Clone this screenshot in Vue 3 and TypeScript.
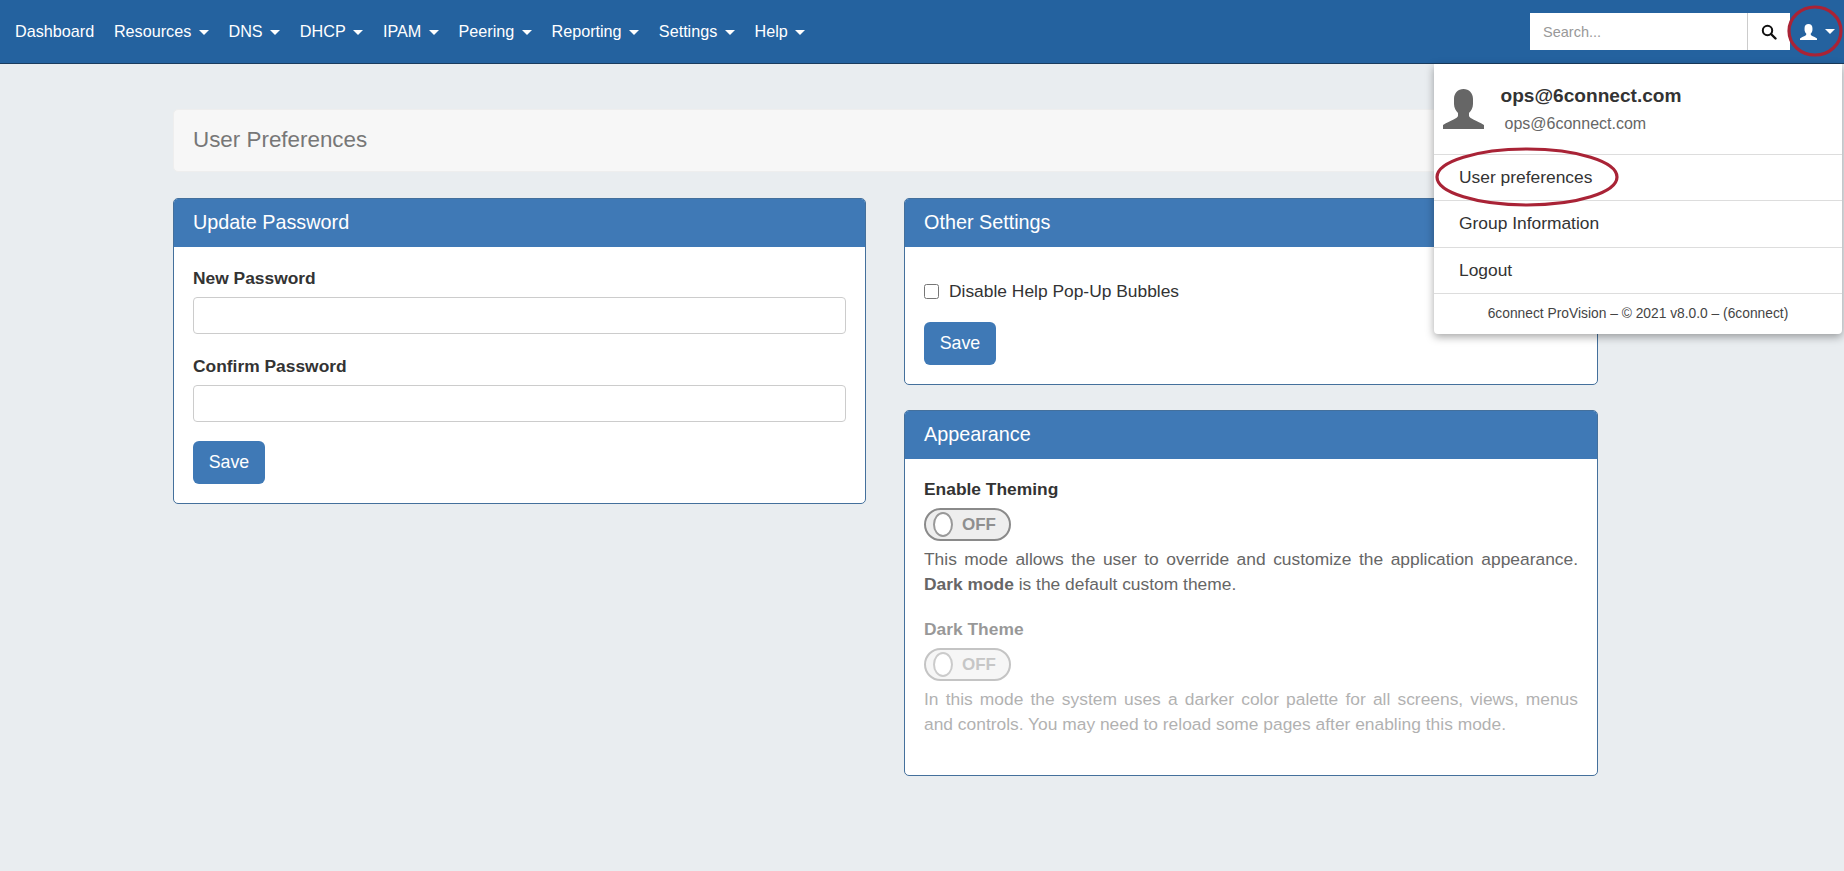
<script setup lang="ts">
const navItems = [
  { label: 'Dashboard', caret: false },
  { label: 'Resources', caret: true },
  { label: 'DNS', caret: true },
  { label: 'DHCP', caret: true },
  { label: 'IPAM', caret: true },
  { label: 'Peering', caret: true },
  { label: 'Reporting', caret: true },
  { label: 'Settings', caret: true },
  { label: 'Help', caret: true },
]

const menuItems = ['User preferences', 'Group Information', 'Logout']

const personPath =
  'M20.500 0C26 0 30 4 30 10v5c0 4-2 7-4 9v3c1 3 7 4 15 9v4H0v-4c8-5 14-6 15-9v-3c-2-2-4-5-4-9v-5C11 4 15 0 20.500 0z'
</script>

<template>
  <div class="page">
    <header class="navbar">
      <nav class="nav-links">
        <a v-for="item in navItems" :key="item.label" class="nav-link">
          {{ item.label }}<span v-if="item.caret" class="caret"></span>
        </a>
      </nav>
      <div class="search">
        <input class="search-input" placeholder="Search..." spellcheck="false" />
        <button class="search-btn" aria-label="Search">
          <svg width="16" height="16" viewBox="0 0 16 16">
            <circle cx="6.500" cy="6.500" r="4.700" fill="none" stroke="#111" stroke-width="2" />
            <path d="M10 10l4.500 4.500" stroke="#111" stroke-width="2.400" stroke-linecap="round" />
          </svg>
        </button>
      </div>
      <div class="user-toggle">
        <svg width="17" height="16" viewBox="0 0 41 40" preserveAspectRatio="none">
          <path :d="personPath" fill="#fff" />
        </svg>
        <span class="caret"></span>
      </div>
    </header>

    <main class="content">
      <div class="page-title">User Preferences</div>
      <div class="columns">
        <section class="panel">
          <h2 class="panel-head">Update Password</h2>
          <div class="panel-body">
            <label class="field-label">New Password</label>
            <input class="text-input" type="password" />
            <label class="field-label second">Confirm Password</label>
            <input class="text-input" type="password" />
            <button class="btn-save">Save</button>
          </div>
        </section>

        <div class="right-col">
          <section class="panel">
            <h2 class="panel-head">Other Settings</h2>
            <div class="panel-body settings-body">
              <label class="check-row">
                <input type="checkbox" />
                <span>Disable Help Pop-Up Bubbles</span>
              </label>
              <button class="btn-save">Save</button>
            </div>
          </section>

          <section class="panel">
            <h2 class="panel-head">Appearance</h2>
            <div class="panel-body appearance-body">
              <label class="field-label">Enable Theming</label>
              <div class="switch">
                <span class="knob"></span>
                <span class="switch-text">OFF</span>
              </div>
              <p class="help">
                This mode allows the user to override and customize the application appearance.
                <b>Dark mode</b> is the default custom theme.
              </p>
              <div class="disabled-group">
                <label class="field-label">Dark Theme</label>
                <div class="switch">
                  <span class="knob"></span>
                  <span class="switch-text">OFF</span>
                </div>
                <p class="help">
                  In this mode the system uses a darker color palette for all screens, views, menus
                  and controls. You may need to reload some pages after enabling this mode.
                </p>
              </div>
            </div>
          </section>
        </div>
      </div>
    </main>

    <div class="user-menu">
      <div class="user-head">
        <svg class="avatar" width="41" height="40" viewBox="0 0 41 40">
          <path :d="personPath" fill="#666" />
        </svg>
        <div>
          <div class="user-name">ops@6connect.com</div>
          <div class="user-mail">ops@6connect.com</div>
        </div>
      </div>
      <a v-for="item in menuItems" :key="item" class="menu-item">{{ item }}</a>
      <div class="menu-foot">6connect ProVision – © 2021 v8.0.0 – (6connect)</div>
    </div>

    <!-- red annotations drawn over the screenshot -->
    <svg class="marks" width="1844" height="871" viewBox="0 0 1844 871">
      <ellipse cx="1815" cy="31" rx="26" ry="24" />
      <ellipse cx="1527" cy="177" rx="90" ry="28" />
    </svg>
  </div>
</template>

<style>
html,
body {
  margin: 0;
  background: #e9edf0;
}
</style>

<style scoped>
.page {
  position: relative;
  width: 1844px;
  height: 871px;
  overflow: hidden;
  background: #e9edf0;
  font-family: 'Liberation Sans', Arial, sans-serif;
  font-size: 16px;
  color: #333;
}

.navbar {
  display: flex;
  align-items: center;
  height: 64px;
  box-sizing: border-box;
  padding: 0 4px 0 15px;
  background: #24629f;
  border-bottom: 1px solid #1a3c5e;
}

.nav-links {
  display: flex;
  flex: 1;
  gap: 19.700px;
  font-size: 16.200px;
}

.nav-link {
  color: #fff;
  white-space: nowrap;
}

.caret {
  display: inline-block;
  margin-left: 7.500px;
  vertical-align: 2px;
  border-top: 5px solid #fff;
  border-left: 5px solid transparent;
  border-right: 5px solid transparent;
}

.search {
  display: flex;
  height: 37px;
}

.search-input {
  width: 218px;
  box-sizing: border-box;
  padding: 0 13px;
  border: 0;
  border-right: 1px solid #ccc;
  font: 14.500px 'Liberation Sans', Arial, sans-serif;
  outline: none;
}

.search-input::placeholder {
  color: #999;
}

.search-btn {
  display: flex;
  align-items: center;
  justify-content: center;
  width: 42px;
  padding: 0;
  border: 0;
  background: #fff;
}

.user-toggle {
  display: flex;
  align-items: center;
  width: 50px;
  padding-left: 10px;
  box-sizing: border-box;
}

.user-toggle .caret {
  margin-left: 8px;
}

.content {
  padding: 45px 246px 0 173px;
}

.page-title {
  height: 63px;
  padding-left: 19px;
  line-height: 60px;
  font-size: 22.400px;
  color: #777;
  background: #f7f7f7;
  border: 1px solid #eee;
  border-radius: 5px;
  box-sizing: border-box;
}

.columns {
  display: grid;
  grid-template-columns: 693px 694px;
  gap: 38px;
  margin-top: 26px;
  align-items: start;
}

.right-col {
  display: flex;
  flex-direction: column;
  gap: 25px;
}

.panel {
  background: #fff;
  border: 1px solid #44709c;
  border-radius: 5px;
  overflow: hidden;
}

.panel-head {
  margin: 0;
  height: 48px;
  padding-left: 19px;
  line-height: 47px;
  font-size: 19.800px;
  font-weight: 400;
  color: #fff;
  background: #3f79b6;
}

.panel-body {
  display: flex;
  flex-direction: column;
  align-items: flex-start;
  padding: 22px 19px 19px;
}

.field-label {
  display: block;
  font-size: 17.400px;
  font-weight: 700;
  line-height: 18px;
  color: #333;
}

.field-label.second {
  margin-top: 23px;
}

.text-input {
  width: 100%;
  height: 37px;
  margin-top: 10px;
  box-sizing: border-box;
  border: 1px solid #ccc;
  border-radius: 4px;
  background: #fff;
}

.btn-save {
  height: 43px;
  width: 72px;
  margin-top: 19px;
  border: 0;
  border-radius: 6px;
  background: #3f79b6;
  color: #fff;
  font: 17.800px 'Liberation Sans', Arial, sans-serif;
}

.settings-body {
  padding-top: 34px;
}

.settings-body .btn-save {
  margin-top: 21px;
}

.check-row {
  display: flex;
  align-items: center;
  gap: 10px;
  height: 20px;
  font-size: 17.400px;
}

.check-row input {
  width: 15px;
  height: 15px;
  margin: 0;
}

.appearance-body {
  padding: 21px 19px 38px;
}

.switch {
  display: flex;
  align-items: center;
  width: 87px;
  height: 33px;
  margin-top: 10px;
  box-sizing: border-box;
  padding-left: 7px;
  background: #eee;
  border: 2px solid #8a8a8a;
  border-radius: 17px;
}

.knob {
  width: 20px;
  height: 25px;
  box-sizing: border-box;
  background: #fff;
  border: 2px solid #999;
  border-radius: 50%;
}

.switch-text {
  margin-left: 9px;
  font-size: 17px;
  font-weight: 700;
  color: #8f8f8f;
}

.help {
  margin: 6px 0 0;
  font-size: 17.400px;
  line-height: 25px;
  text-align: justify;
  color: #666;
}

.help b {
  color: #666;
}

.disabled-group {
  margin-top: 23px;
  opacity: 0.5;
}

.user-menu {
  position: absolute;
  top: 64px;
  left: 1434px;
  width: 408px;
  height: 270px;
  background: #fff;
  border-radius: 0 0 4px 4px;
  box-shadow: 0 3px 8px rgba(0, 0, 0, 0.35);
}

.user-head {
  display: flex;
  align-items: flex-start;
  height: 90px;
  box-sizing: border-box;
  padding: 20px 0 0 9px;
}

.avatar {
  margin: 5px 16.500px 0 0;
}

.user-name {
  font-size: 19.100px;
  font-weight: 700;
  line-height: 24px;
  color: #333;
}

.user-mail {
  margin: 5px 0 0 4px;
  font-size: 16px;
  line-height: 22px;
  color: #666;
}

.menu-item {
  display: block;
  height: 46.300px;
  padding-left: 25px;
  line-height: 45px;
  font-size: 17.400px;
  color: #333;
  border-top: 1px solid #ddd;
  box-sizing: border-box;
}

.menu-foot {
  height: 41px;
  line-height: 40px;
  text-align: center;
  font-size: 13.800px;
  color: #444;
  border-top: 1px solid #ddd;
  box-sizing: border-box;
}

.marks {
  position: absolute;
  top: 0;
  left: 0;
  pointer-events: none;
}

.marks ellipse {
  fill: none;
  stroke: #a92336;
  stroke-width: 3.200;
}
</style>
